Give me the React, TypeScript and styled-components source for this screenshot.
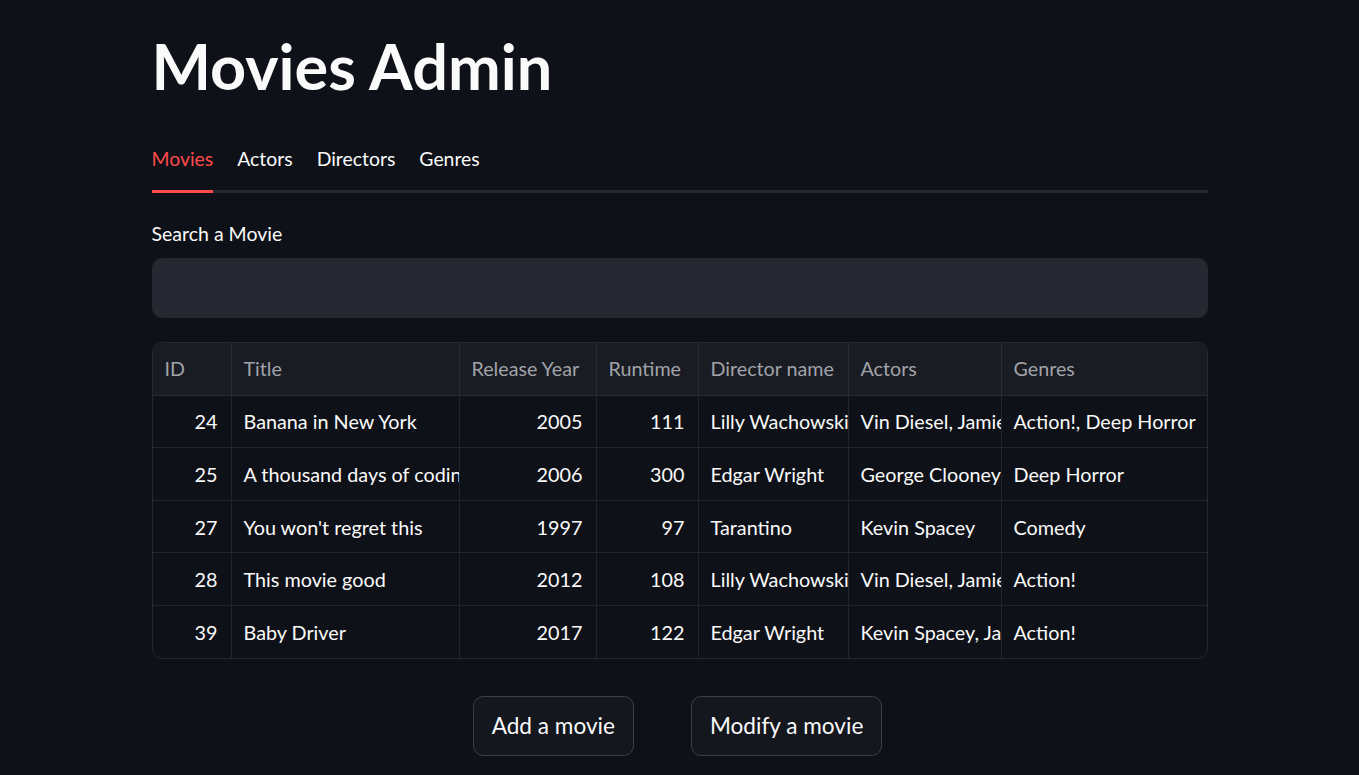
import React from "react";
import styled, { createGlobalStyle } from "styled-components";

const GlobalStyle = createGlobalStyle`
  html, body {
    margin: 0;
    padding: 0;
    background: #0e1117;
  }
  body {
    font-family: Lato, "Noto Sans", sans-serif;
    color: #fafafa;
  }
  * { box-sizing: border-box; }
`;

const Page = styled.main`
  max-width: 1056px;
  margin: 0 auto;
  padding-top: 28px;
  display: flex;
  flex-direction: column;
`;

const Title = styled.h1`
  margin: 0;
  font-size: 63px;
  font-weight: 700;
  line-height: 1.2;
  color: #fafafa;
`;

const TabBar = styled.nav`
  margin-top: 40px;
  display: flex;
  gap: 24px;
  border-bottom: 3px solid #26272f;
`;

const Tab = styled.div<{ $active?: boolean }>`
  font-size: 19.4px;
  line-height: 30px;
  padding-bottom: 16px;
  margin-bottom: -3px;
  border-bottom: 3px solid ${(p) => (p.$active ? "#ff4b4b" : "transparent")};
  color: ${(p) => (p.$active ? "#ff4b4b" : "#fafafa")};
  cursor: pointer;
`;

const Label = styled.label`
  margin-top: 27px;
  font-size: 19.5px;
  line-height: 28px;
  color: #fafafa;
`;

const SearchInput = styled.input`
  margin-top: 10px;
  height: 60px;
  width: 100%;
  border: none;
  outline: none;
  border-radius: 10px;
  background: #262730;
  color: #fafafa;
  font-family: inherit;
  font-size: 19px;
  padding: 0 16px;
`;

const Grid = styled.div`
  margin-top: 24px;
  display: grid;
  grid-template-columns: 79px 228px 137px 102px 150px 153px 1fr;
  border: 1px solid #26282f;
  border-radius: 10px;
  overflow: hidden;
`;

const HeadCell = styled.div<{ $last?: boolean }>`
  height: 53px;
  display: flex;
  align-items: center;
  padding: 0 12px;
  background: #1a1c23;
  color: #a1a3a9;
  font-size: 19.7px;
  border-bottom: 1px solid #2a2c33;
  border-right: ${(p) => (p.$last ? "none" : "1px solid #2a2c33")};
  white-space: nowrap;
  overflow: hidden;
`;

const Cell = styled.div<{ $num?: boolean; $last?: boolean; $bottom?: boolean }>`
  height: ${(p) => (p.$bottom ? "52px" : "52.6px")};
  display: flex;
  align-items: center;
  justify-content: ${(p) => (p.$num ? "flex-end" : "flex-start")};
  padding: ${(p) => (p.$num ? "0 13px 0 0" : "0 0 0 12px")};
  color: #fafafa;
  font-size: 19.8px;
  white-space: nowrap;
  overflow: hidden;
  border-bottom: ${(p) => (p.$bottom ? "none" : "1px solid #23252c")};
  border-right: ${(p) => (p.$last ? "none" : "1px solid #23252c")};
`;

const Buttons = styled.div`
  margin-top: 37px;
  display: flex;
  justify-content: center;
  gap: 57px;
  padding-right: 4px;
`;

const Button = styled.button`
  height: 60px;
  padding: 0 18px;
  border-radius: 10px;
  border: 1px solid #3b3e45;
  background: #14171e;
  color: #fafafa;
  font-family: inherit;
  font-size: 22.6px;
  cursor: pointer;
`;

const headers = ["ID", "Title", "Release Year", "Runtime", "Director name", "Actors", "Genres"];

const rows: [number, string, number, number, string, string, string][] = [
  [24, "Banana in New York", 2005, 111, "Lilly Wachowski", "Vin Diesel, Jamie Foxx", "Action!, Deep Horror"],
  [25, "A thousand days of coding", 2006, 300, "Edgar Wright", "George Clooney", "Deep Horror"],
  [27, "You won't regret this", 1997, 97, "Tarantino", "Kevin Spacey", "Comedy"],
  [28, "This movie good", 2012, 108, "Lilly Wachowski", "Vin Diesel, Jamie Foxx", "Action!"],
  [39, "Baby Driver", 2017, 122, "Edgar Wright", "Kevin Spacey, Jamie Foxx", "Action!"],
];

export default function App() {
  return (
    <>
      <GlobalStyle />
      <Page>
        <Title>Movies Admin</Title>
        <TabBar>
          <Tab $active>Movies</Tab>
          <Tab>Actors</Tab>
          <Tab>Directors</Tab>
          <Tab>Genres</Tab>
        </TabBar>
        <Label htmlFor="search">Search a Movie</Label>
        <SearchInput id="search" />
        <Grid>
          {headers.map((h, i) => (
            <HeadCell key={h} $last={i === headers.length - 1}>
              {h}
            </HeadCell>
          ))}
          {rows.map((r, ri) =>
            r.map((v, ci) => (
              <Cell
                key={`${ri}-${ci}`}
                $num={typeof v === "number"}
                $last={ci === r.length - 1}
                $bottom={ri === rows.length - 1}
              >
                {v}
              </Cell>
            ))
          )}
        </Grid>
        <Buttons>
          <Button>Add a movie</Button>
          <Button>Modify a movie</Button>
        </Buttons>
      </Page>
    </>
  );
}
